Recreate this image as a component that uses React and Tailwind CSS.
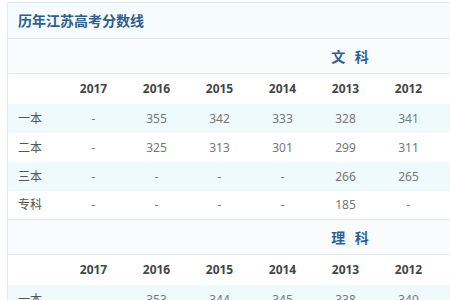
import React from 'react';

const years = ['2017', '2016', '2015', '2014', '2013', '2012'];

const sections = [
  {
    name: '文 科',
    rows: [
      ['一本', '-', '355', '342', '333', '328', '341'],
      ['二本', '-', '325', '313', '301', '299', '311'],
      ['三本', '-', '-', '-', '-', '266', '265'],
      ['专科', '-', '-', '-', '-', '185', '-'],
    ],
  },
  {
    name: '理 科',
    rows: [
      ['一本', '-', '353', '344', '345', '338', '340'],
      ['二本', '-', '320', '311', '304', '300', '313'],
    ],
  },
];

const Row = ({ cells, className, labelClass, cellClass }) => (
  <div className={`flex items-center ${className}`}>
    <div className={`w-[54px] shrink-0 pl-[10px] ${labelClass}`}>{cells[0]}</div>
    {cells.slice(1).map((c, i) => (
      <div key={i} className={`w-[63px] shrink-0 text-center ${cellClass}`}>{c}</div>
    ))}
  </div>
);

export default function App() {
  return (
    <div className="w-[450px] h-[300px] overflow-hidden bg-white pt-[2px] pl-[7px]" style={{ fontFamily: '"Noto Sans", "Noto Sans CJK SC", sans-serif' }}>
      <div className="w-[688px] border-l border-t border-[#e3e9ed]">
        {/* Title */}
        <div className="h-[36px] flex items-center pl-[10px] bg-[#f6fbfd] border-b border-[#e1e8ec]">
          <h1 className="text-[14px] font-bold text-[#2e5d8f] tracking-[0px]">历年江苏高考分数线</h1>
        </div>

        {sections.map((s) => (
          <div key={s.name}>
            <div className="h-[35px] flex items-center justify-center bg-[#f9fbfc] border-b border-[#e3e9ed]">
              <span className="text-[14px] font-bold text-[#2f5f93] tracking-[3px]">{s.name}</span>
            </div>
            <Row
              cells={['', ...years]}
              className="h-[30px] bg-white"
              labelClass=""
              cellClass="text-[12px] font-bold text-[#454545]"
            />
            {s.rows.map((r, i) => (
              <Row
                key={r[0]}
                cells={r}
                className={`h-[29px] ${i % 2 === 0 ? 'bg-[#effafd]' : 'bg-white'} ${i === s.rows.length - 1 ? 'border-b border-[#e3e9ed]' : ''}`}
                labelClass="text-[12px] text-[#555]"
                cellClass="text-[12px] text-[#777]"
              />
            ))}
          </div>
        ))}
      </div>
    </div>
  );
}
